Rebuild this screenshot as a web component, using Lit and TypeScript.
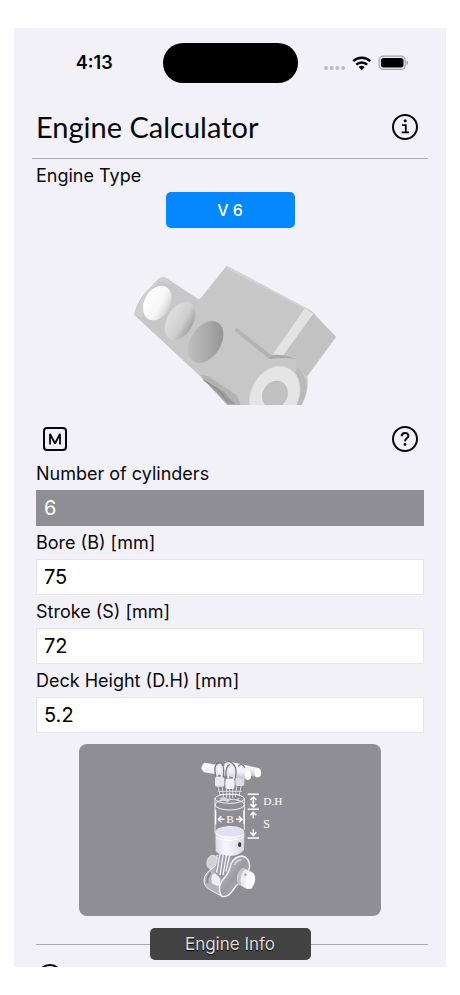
import { LitElement, html, css, svg } from "lit";
import { customElement, state } from "lit/decorators.js";

interface Field {
  id: string;
  label: string;
  value: string;
  locked?: boolean;
}

@customElement("status-bar")
class StatusBar extends LitElement {
  static styles = css`
    :host {
      display: grid;
      grid-template-columns: 1fr 135px 1fr;
      align-items: center;
      height: 70px;
      font: 600 18px/24px Inter, "Liberation Sans", sans-serif;
      color: #000;
    }
    .time {
      justify-self: center;
      padding-left: 12px;
    }
    .island {
      height: 40px;
      border-radius: 20px;
      background: #000;
    }
    .signals {
      justify-self: center;
      padding-right: 12px;
      display: flex;
    }
  `;

  render() {
    return html`
      <span class="time">4:13</span>
      <span class="island"></span>
      <span class="signals">
        <svg width="86" height="20" viewBox="0 0 86 20" aria-hidden="true">
          <g fill="#bdbcc3">
            <circle cx="3" cy="15" r="2" /><circle cx="8.7" cy="15" r="2" />
            <circle cx="14.4" cy="15" r="2" /><circle cx="20.1" cy="15" r="2" />
          </g>
          <g fill="none" stroke="#000" stroke-width="2.5">
            <path d="M30.200 8.200a12.200 12.200 0 0 1 17 0" />
            <path d="M33.300 11.600a7.800 7.800 0 0 1 10.800 0" />
          </g>
          <path d="M38.700 17.200l-3-3.100a4.400 4.400 0 0 1 6 0z" />
          <rect x="56.200" y="3.200" width="26" height="13.200" rx="4" fill="none" stroke="#a09fa5" stroke-width="1.2" />
          <rect x="58" y="5" width="22.500" height="9.600" rx="2.500" />
          <path d="M83.600 7.500c2 .7 2 3.900 0 4.600z" fill="#a09fa5" />
        </svg>
      </span>
    `;
  }
}

@customElement("engine-picture")
class EnginePicture extends LitElement {
  static styles = css`
    :host {
      display: flex;
      justify-content: center;
      padding: 22px 0 0 10px;
    }
  `;

  render() {
    return html`
      <svg width="230" height="155" viewBox="0 0 690 465" role="img" aria-label="V 6 engine block">
        <defs>
          <linearGradient id="b1" x1="0" x2="1"><stop stop-color="#fff" /><stop offset=".65" stop-color="#f6f6f7" /><stop offset="1" stop-color="#d2d2d3" /></linearGradient>
          <linearGradient id="b2" x1="0" x2="1"><stop stop-color="#dedede" /><stop offset=".6" stop-color="#cfcfcf" /><stop offset="1" stop-color="#a4a4a4" /></linearGradient>
          <linearGradient id="b3" x1="0" y1="1" x2="1" y2="0"><stop stop-color="#c6c6c6" /><stop offset=".55" stop-color="#a9a9a9" /><stop offset="1" stop-color="#8a8a8a" /></linearGradient>
        </defs>
        <path d="M320 47L574 182 648 261 562 377Q568 426 544 465H322L240 378 42 194Q48 164 70 134L117 85 133 80 236 148 243 143Z" fill="#c7c7c8" />
        <path d="M320 47L574 182 558 179 318 54Z" fill="#d4d4d5" />
        <path d="M580 191L648 261 562 377 530 349 527 326 488 315Z" fill="#c2c2c3" />
        <path d="M555 175L580 191 488 318 457 315Z" fill="#e3e3e4" />
        <path d="M42 194L70 134 117 85 133 80 155 105 117 92 75 142 66 205Z" fill="#d0d0d1" />
        <path d="M345 235Q350 231 361 242L455 316 448 327 347 245Z" fill="#b3b3b4" />
        <path d="M455 315Q492 312 529 328Q500 321 448 327Z" fill="#a9a9aa" />
        <path d="M240 374L264 378 350 436 362 465H322Z" fill="#b2b2b3" />
        <path d="M244 382L270 401 311 425 328 446 347 462H324Z" fill="#9b9b9c" />
        <path d="M250 390L294 418 323 455" fill="none" stroke="#858586" stroke-width="3" />
        <ellipse cx="112" cy="159" rx="39" ry="55" transform="rotate(28 112 159)" fill="url(#b1)" />
        <ellipse cx="180" cy="213" rx="39" ry="62" transform="rotate(30 180 213)" fill="url(#b2)" />
        <ellipse cx="257" cy="276" rx="45" ry="69" transform="rotate(33 257 276)" fill="url(#b3)" />
        <path d="M533 350Q580 400 544 465H520Q553 400 525 365Z" fill="#b9b9ba" />
        <ellipse cx="464" cy="436" rx="71" ry="91" transform="rotate(28 464 436)" fill="#e5e5e6" stroke="#d9d9da" stroke-width="2" />
        <ellipse cx="465" cy="434" rx="36" ry="42" transform="rotate(28 465 434)" fill="#c1c1c2" stroke="#b3b3b4" stroke-width="2" />
      </svg>
    `;
  }
}

@customElement("piston-diagram")
class PistonDiagram extends LitElement {
  static styles = css`
    :host {
      display: flex;
      justify-content: center;
      width: 78%;
      margin: 11px auto 0;
      overflow: hidden;
      border-radius: 8px;
      background: #8f8e94;
    }
    .caption {
      font-family: "Liberation Serif", serif;
      fill: #fff;
    }
  `;

  render() {
    const arrow = (x: number, y: number, turn: number) => svg`
      <path d="M-9 9L0 0 9 9M0 0V18" transform="translate(${x} ${y}) rotate(${turn})" />`;
    return html`
      <svg width="140" height="172" viewBox="-60 12 420 516" role="img" aria-label="Bore, stroke and deck height of a cylinder">
        <defs>
          <linearGradient id="bar" x1="0" y1="0" x2="0" y2="1"><stop stop-color="#fff" /><stop offset=".55" stop-color="#f1f0f7" /><stop offset="1" stop-color="#b9b8c1" /></linearGradient>
          <linearGradient id="skirt" x1="0" x2="1"><stop stop-color="#dcdae6" /><stop offset=".35" stop-color="#f8f6ff" /><stop offset="1" stop-color="#dad8e5" /></linearGradient>
          <linearGradient id="web" x1="0" y1="0" x2="1" y2="1"><stop stop-color="#c9c8ce" /><stop offset=".5" stop-color="#9c9ba2" /><stop offset="1" stop-color="#bcbbc2" /></linearGradient>
        </defs>

        <path d="M110 118H190V146L180 170H118L108 146Z" fill="#85848c" />
        <path d="M114 140L121 168M126 136L131 172M140 145V174M149 145V178M158 145V174M171 137L166 171M184 137L177 168M114 154H186M119 164H180" fill="none" stroke="#dddce5" stroke-width="3" />
        <path d="M136 62L234 84Q246 97 236 111L226 110 130 90Z" fill="url(#bar)" />
        <ellipse cx="233" cy="98" rx="10" ry="14" fill="#fff" />
        <rect x="105" y="110" width="28" height="30" rx="6" fill="#e9e8f1" />
        <rect x="166" y="110" width="27" height="28" rx="6" fill="#dfdee8" />
        <path d="M74 68L204 90Q218 104 206 120L72 97Q56 82 74 68Z" fill="url(#bar)" />
        <ellipse cx="204" cy="105" rx="10" ry="15" fill="#fff" />
        <rect x="136" y="116" width="28" height="31" rx="7" fill="#f1f0f9" />
        <g fill="none" stroke="#7b7a83" stroke-width="4">
          <path d="M107 108Q99 74 117 68Q135 68 130 112M139 114Q134 74 155 72Q173 74 166 115" />
          <path d="M133 70Q145 58 159 72M174 80Q184 66 195 84" />
        </g>
        <g fill="none" stroke="#e8e7ef" stroke-width="5">
          <path d="M112 110Q105 76 119 73Q129 76 125 112M145 116Q140 80 155 78Q166 81 161 117" />
          <path d="M135 74Q146 64 157 76M176 84Q184 72 193 88" />
        </g>

        <g fill="none" stroke="#fff" stroke-width="2.5">
          <ellipse cx="149" cy="176" rx="44" ry="14" />
          <ellipse cx="149" cy="194" rx="44" ry="16" />
          <path d="M105 174V280M193 174V270" />
        </g>
        <path d="M117 176Q131 168 143 176T180 173L174 181 155 178 143 186 127 181Z" fill="#d8d7df" />
        <path d="M107 211V253M192 211V253" stroke="#fff" stroke-width="4" />

        <ellipse cx="96" cy="366" rx="15" ry="21" transform="rotate(15 96 366)" fill="#d3d2d9" stroke="#efeef4" stroke-width="2" />
        <path d="M110 346Q117 371 99 384Q76 397 72 417Q70 438 88 448L127 470 160 430 150 346Z" fill="#b5b4bb" stroke="#f2f1f7" stroke-width="3" />
        <path d="M92 398Q80 412 82 430" fill="none" stroke="#86858d" stroke-width="6" />
        <path d="M98 403Q107 395 120 400V440L98 432Q90 418 98 403Z" fill="#eeedf4" />
        <path d="M118 332L104 398 126 420 144 390 158 365V332Z" fill="#9e9da5" />
        <path d="M121 338L110 398M130 340L120 405M140 341L129 405M150 341L138 395" fill="none" stroke="#f6f5fb" stroke-width="4" />
        <path d="M106 275Q107 262 149 258Q193 260 193 276L192 329Q179 347 150 347Q120 347 107 334Z" fill="url(#skirt)" />
        <ellipse cx="149" cy="275" rx="42" ry="14" fill="#e2dff5" />
        <path d="M107 281Q125 293 148 292Q180 292 193 282M107 292Q128 303 151 301Q181 299 193 291" fill="none" stroke="#fff" stroke-width="3" />
        <ellipse cx="179" cy="314" rx="5" ry="7" fill="#3b3a42" />
        <path d="M153 371Q163 350 186 348Q207 351 209 380Q205 407 184 424Q166 437 156 455Q146 470 128 470Q114 458 120 434Q126 420 138 408Q149 394 153 371Z" fill="url(#web)" stroke="#f6f5fa" stroke-width="4" />
        <path d="M163 375Q171 360 185 359" fill="none" stroke="#e0dfe6" stroke-width="4" />
        <path d="M188 384L216 396Q231 417 215 446L200 447 175 432Q163 407 188 384Z" fill="#edecf3" />
        <path d="M188 384Q164 398 175 432L184 436Q176 405 195 388Z" fill="#c3c2ca" />
        <ellipse cx="211" cy="421" rx="14" ry="25" transform="rotate(10 211 421)" fill="#fff" />
        <path d="M192 404H200M196 400V408" stroke="#8b8a94" stroke-width="2" />

        <g fill="none" stroke="#fff" stroke-width="4.500">
          <path d="M203 163H237M203 208H237M203 294H237" />
          ${arrow(220, 171, 0)} ${arrow(220, 201, 180)}
          ${arrow(220, 217, 0)} ${arrow(220, 286, 180)}
          ${arrow(115, 238, -90)} ${arrow(186, 238, 90)}
        </g>
        <g class="caption">
          <text x="139" y="249" font-size="34">B</text>
          <text x="250" y="196" font-size="34">D.H</text>
          <text x="250" y="263" font-size="36">S</text>
        </g>
      </svg>
    `;
  }
}

@customElement("app-root")
class AppRoot extends LitElement {
  @state() private fields: Field[] = [
    { id: "cylinders", label: "Number of cylinders", value: "6", locked: true },
    { id: "bore", label: "Bore (B) [mm]", value: "75" },
    { id: "stroke", label: "Stroke (S) [mm]", value: "72" },
    { id: "deck", label: "Deck Height (D.H) [mm]", value: "5.2" },
  ];

  static styles = css`
    :host {
      display: block;
      box-sizing: border-box;
      height: 100vh;
      padding: 28px 14px;
      background: #fff;
      color: #08080c;
      font: 400 18px/33px Inter, "Liberation Sans", sans-serif;
    }
    *, *::before, *::after {
      box-sizing: border-box;
    }
    .screen {
      height: 100%;
      overflow: hidden;
      background: #f2f1f8;
    }
    button {
      margin: 0;
      padding: 0;
      border: 0;
      background: none;
      color: inherit;
      font: inherit;
      cursor: pointer;
    }
    header {
      display: flex;
      align-items: center;
      justify-content: space-between;
      height: 61px;
      margin: 0 18px;
      padding: 0 9px 2px 4px;
      border-bottom: 1px solid #aaa9af;
    }
    h1 {
      margin: 0;
      font: 400 29px/36px Lato, "Liberation Sans", sans-serif;
    }
    .content {
      padding: 0 22px;
    }
    .caption, label {
      display: block;
    }
    .type {
      display: block;
      width: 129px;
      height: 36px;
      margin: 0 auto;
      border-radius: 5px;
      background: #0588fe;
      color: #fff;
      font-size: 16px;
      font-weight: 500;
    }
    .tools {
      display: flex;
      align-items: center;
      justify-content: space-between;
      height: 52px;
      padding: 16px 5px 0;
    }
    .icon {
      display: flex;
    }
    input {
      display: block;
      width: 100%;
      height: 36px;
      padding: 0 7px;
      border: 1px solid #e6e5eb;
      border-radius: 0;
      outline: 0;
      background: #fff;
      color: #000;
      font: 400 20px/32px Inter, "Liberation Sans", sans-serif;
    }
    .locked {
      border-color: #8f8e94;
      background: #8f8e94;
      color: #fff;
    }
    .divider {
      display: grid;
      grid-template-columns: 1fr auto 1fr;
      align-items: center;
      margin: 12px 0 3px;
    }
    .divider::before, .divider::after {
      content: "";
      height: 1px;
      background: #aaa9af;
    }
    .divider::after {
      margin-right: -4px;
    }
    .info {
      width: 161px;
      height: 32px;
      border-radius: 5px;
      background: #434343;
      color: #dcdcdc;
      font-size: 17px;
      line-height: 32px;
      text-shadow: 0 1px 1px #000;
    }
  `;

  private edit(id: string, event: Event) {
    const value = (event.target as HTMLInputElement).value;
    this.fields = this.fields.map((f) => (f.id === id ? { ...f, value } : f));
  }

  private ring(glyph: unknown) {
    return html`
      <svg width="28" height="28" viewBox="0 0 28 28" fill="none" stroke="#09090d" stroke-width="2" aria-hidden="true">
        <circle cx="14" cy="14" r="12" />${glyph}
      </svg>`;
  }

  render() {
    const info = svg`<path d="M11 12.200H14.800V19M10.700 19.400H18" stroke-width="1.800" /><circle cx="14.200" cy="7.800" r="1.500" fill="#09090d" stroke="none" />`;
    const help = svg`<path d="M10.700 11.300C10.900 7 17.500 7.200 17.400 11C17.300 13.300 14 13.400 14 16.200" /><circle cx="14" cy="19.400" r="1.400" fill="#09090d" stroke="none" />`;
    return html`
      <main class="screen">
        <status-bar></status-bar>
        <header>
          <h1>Engine Calculator</h1>
          <button class="icon" aria-label="About">${this.ring(info)}</button>
        </header>
        <div class="content">
          <span class="caption" id="type-caption">Engine Type</span>
          <button class="type" aria-describedby="type-caption">V 6</button>
          <engine-picture></engine-picture>
          <div class="tools">
            <button class="icon" aria-label="Metric units">
              <svg width="28" height="28" viewBox="0 0 28 28" fill="none" stroke="#09090d" stroke-width="2" aria-hidden="true">
                <rect x="3" y="3" width="22" height="22" rx="3" />
                <path d="M9 19.500V8.800L14 18.500 19 8.800V19.500" stroke-width="1.800" stroke-linejoin="bevel" />
              </svg>
            </button>
            <button class="icon" aria-label="Help">${this.ring(help)}</button>
          </div>
          ${this.fields.map(
            (f) => html`
              <label for=${f.id}>${f.label}</label>
              <input
                id=${f.id}
                class=${f.locked ? "locked" : ""}
                inputmode="decimal"
                .value=${f.value}
                ?readonly=${f.locked}
                @input=${(e: Event) => this.edit(f.id, e)}
              />
            `
          )}
          <piston-diagram></piston-diagram>
          <div class="divider"><button class="info">Engine Info</button></div>
          <button class="icon" aria-label="Engine details">${this.ring(info)}</button>
        </div>
      </main>
    `;
  }
}
